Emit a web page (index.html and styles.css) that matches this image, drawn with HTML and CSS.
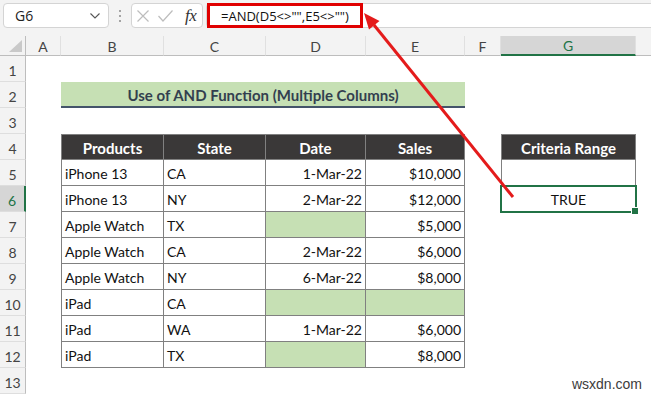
FILE: index.html
```html
<!DOCTYPE html>
<html>
<head>
<meta charset="utf-8">
<title>Use of AND Function</title>
<link rel="stylesheet" href="styles.css">
</head>
<body>
<div class="app">
  <div class="topbar">
    <div class="namebox">
      <span>G6</span>
      <svg class="chev" width="10" height="6" viewBox="0 0 10 6"><path d="M0.5 0.5 L5 5 L9.5 0.5" fill="none" stroke="#555" stroke-width="1.1"/></svg>
    </div>
    <div class="dots"><i></i><i></i><i></i></div>
    <div class="fxbox">
      <svg class="ico-x" width="12" height="12" viewBox="0 0 12 12"><path d="M0.5 0.5 L11.5 11.5 M11.5 0.5 L0.5 11.5" stroke="#bdbdbd" stroke-width="1.2" fill="none"/></svg>
      <svg class="ico-ok" width="15" height="12" viewBox="0 0 15 12"><path d="M0.5 6 L5 11 L14.5 0.5" stroke="#bdbdbd" stroke-width="1.2" fill="none"/></svg>
      <span class="fx">fx</span>
    </div>
    <div class="formula"><span class="hl">=AND(D5&lt;&gt;"",E5&lt;&gt;"")</span></div>
  </div>

  <div class="sheet">
    <div class="corner"><svg width="14" height="13" viewBox="0 0 14 13"><path d="M13 0 L13 12 L0 12 Z" fill="#c9c9c9"/></svg></div>
    <div class="ch">A</div><div class="ch">B</div><div class="ch">C</div><div class="ch">D</div><div class="ch">E</div><div class="ch">F</div><div class="ch sel">G</div><div class="ch last"></div>

    <div class="rh">1</div><div class="blank span8"></div>

    <div class="rh">2</div><div class="blank"></div><div class="title">Use of AND Function (Multiple Columns)</div><div class="blank span3"></div>

    <div class="rh">3</div><div class="blank span8"></div>

    <div class="rh">4</div><div class="blank"></div>
    <div class="t th first">Products</div><div class="t th">State</div><div class="t th">Date</div><div class="t th">Sales</div>
    <div class="blank"></div><div class="t th first">Criteria Range</div><div class="blank"></div>

    <div class="rh">5</div><div class="blank"></div>
    <div class="t first">iPhone 13</div><div class="t">CA</div><div class="t r">1-Mar-22</div><div class="t r">$10,000</div>
    <div class="blank"></div><div class="t first crit"></div><div class="blank"></div>

    <div class="rh sel">6</div><div class="blank"></div>
    <div class="t first">iPhone 13</div><div class="t">NY</div><div class="t r">2-Mar-22</div><div class="t r">$12,000</div>
    <div class="blank"></div><div class="t first active">TRUE</div><div class="blank"></div>

    <div class="rh">7</div><div class="blank"></div>
    <div class="t first">Apple Watch</div><div class="t">TX</div><div class="t r green"></div><div class="t r">$5,000</div>
    <div class="blank span3"></div>

    <div class="rh">8</div><div class="blank"></div>
    <div class="t first">Apple Watch</div><div class="t">CA</div><div class="t r">2-Mar-22</div><div class="t r">$6,000</div>
    <div class="blank span3"></div>

    <div class="rh">9</div><div class="blank"></div>
    <div class="t first">Apple Watch</div><div class="t">NY</div><div class="t r">6-Mar-22</div><div class="t r">$8,000</div>
    <div class="blank span3"></div>

    <div class="rh">10</div><div class="blank"></div>
    <div class="t first">iPad</div><div class="t">CA</div><div class="t r green"></div><div class="t r green"></div>
    <div class="blank span3"></div>

    <div class="rh">11</div><div class="blank"></div>
    <div class="t first">iPad</div><div class="t">WA</div><div class="t r">1-Mar-22</div><div class="t r">$6,000</div>
    <div class="blank span3"></div>

    <div class="rh">12</div><div class="blank"></div>
    <div class="t first">iPad</div><div class="t">TX</div><div class="t r green"></div><div class="t r">$8,000</div>
    <div class="blank span3"></div>

    <div class="rh">13</div><div class="blank span8"></div>
  </div>

  <svg class="arrow" width="651" height="395" viewBox="0 0 651 395">
    <line x1="513" y1="197" x2="374" y2="25" stroke="#e41b1b" stroke-width="3"/>
    <polygon points="364,13 379.5,21 369,29.5" fill="#e41b1b"/>
  </svg>
  <div class="wm">wsxdn.com</div>
</div>
</body>
</html>
```

FILE: styles.css
```css
* { box-sizing: border-box; }
html, body { margin: 0; padding: 0; background: #fff; }
body { width: 651px; height: 395px; overflow: hidden; font-family: Lato, "Open Sans", sans-serif; }

.app { position: relative; width: 651px; height: 395px; overflow: hidden; }

/* formula bar */
.topbar {
  height: 36px;
  background: #f3f3f3;
  display: flex;
  align-items: flex-start;
  padding: 3px 0 0 3px;
}
.namebox {
  width: 106px; height: 25px;
  background: #fff;
  border: 1px solid #d4d4d4;
  border-radius: 4px;
  display: flex; align-items: center; justify-content: space-between;
  padding: 0 8px 0 11px;
  font: 14px "Open Sans", sans-serif;
  color: #222;
}
.dots {
  width: 22px; height: 25px;
  display: flex; flex-direction: column; align-items: center; justify-content: center; gap: 3px;
}
.dots i { width: 2px; height: 2px; background: #8a8a8a; border-radius: 1px; }
.fxbox {
  width: 72px; height: 25px;
  background: #fff;
  border: 1px solid #d4d4d4;
  border-radius: 4px;
  display: flex; align-items: center;
  padding-left: 5px;
}
.ico-ok { margin-left: 9px; }
.fx {
  margin-left: 12px;
  font: italic 17px "Liberation Serif", serif;
  color: #333;
  letter-spacing: -0.5px;
  line-height: 1;
}
.formula {
  flex: 1;
  margin-left: 3px;
  margin-right: -6px;
  height: 25px;
  background: #fff;
  border: 1px solid #d4d4d4;
  border-radius: 4px;
  display: flex;
}
.hl {
  display: flex; align-items: center;
  margin: -1px 0;
  border: 3px solid #e00000;
  padding: 0 11px;
  font: 13px "Open Sans", sans-serif;
  color: #111;
}

/* sheet grid */
.sheet {
  display: grid;
  grid-template-columns: 26px 35px 103px 102px 100px 99px 36px 135px 1fr;
  grid-template-rows: 20px repeat(13, 26px);
  font-size: 14px;
  color: #111;
}
.corner {
  background: #f3f3f3;
  border-right: 1px solid #bdbdbd;
  border-bottom: 1px solid #bdbdbd;
  display: flex; align-items: flex-end; justify-content: flex-end;
  padding: 0 2px 2px 0;
}
.ch {
  background: #f3f3f3;
  border-bottom: 1px solid #bdbdbd;
  border-right: 1px solid #e0e0e0;
  display: flex; align-items: center; justify-content: center;
  color: #444;
  font-size: 14px;
  padding-top: 1px;
}
.ch.sel {
  background: #d6d6d6;
  border-bottom: 2px solid #217346;
  color: #217346;
}
.ch.last { border-right: none; }
.rh {
  background: #f3f3f3;
  border-right: 1px solid #bdbdbd;
  border-bottom: 1px solid #dedede;
  display: flex; align-items: center; justify-content: center;
  color: #444;
  font-size: 14px;
  padding-top: 4px;
}
.rh.sel {
  background: #d6d6d6;
  border-right: 2px solid #217346;
  color: #217346;
}
.blank { background: #fff; }
.span8 { grid-column: span 8; }
.span3 { grid-column: span 3; }

.title {
  grid-column: span 4;
  background: #c6e0b4;
  border-bottom: 2px solid #44546a;
  display: flex; align-items: center; justify-content: center;
  font-weight: 700;
  font-size: 15px;
  color: #333f4f;
  padding-top: 2px;
}

.t {
  border-right: 1px solid #808080;
  border-bottom: 1px solid #808080;
  display: flex; align-items: center;
  padding: 2px 3px 0 3px;
  white-space: nowrap;
  overflow: visible;
}
.t.first { border-left: 1px solid #808080; }
.t.r { justify-content: flex-end; }
.th {
  background: #3a3838;
  color: #fff;
  font-weight: 700;
  font-size: 15px;
  justify-content: center;
  border-top: 1px solid #808080;
}
.green { background: #c6e0b4; }
.crit { border-bottom: none; }
.active {
  position: relative;
  justify-content: center;
  outline: 2px solid #217346;
  outline-offset: -1px;
}
.active::after {
  content: "";
  position: absolute;
  right: -4px; bottom: -4px;
  width: 6px; height: 6px;
  background: #217346;
  border: 1px solid #fff;
}

.arrow { position: absolute; left: 0; top: 0; pointer-events: none; }
.wm {
  position: absolute;
  right: 9px; bottom: 3px;
  font: 14px "Liberation Sans", sans-serif;
  color: #3c3c3c;
}
```
